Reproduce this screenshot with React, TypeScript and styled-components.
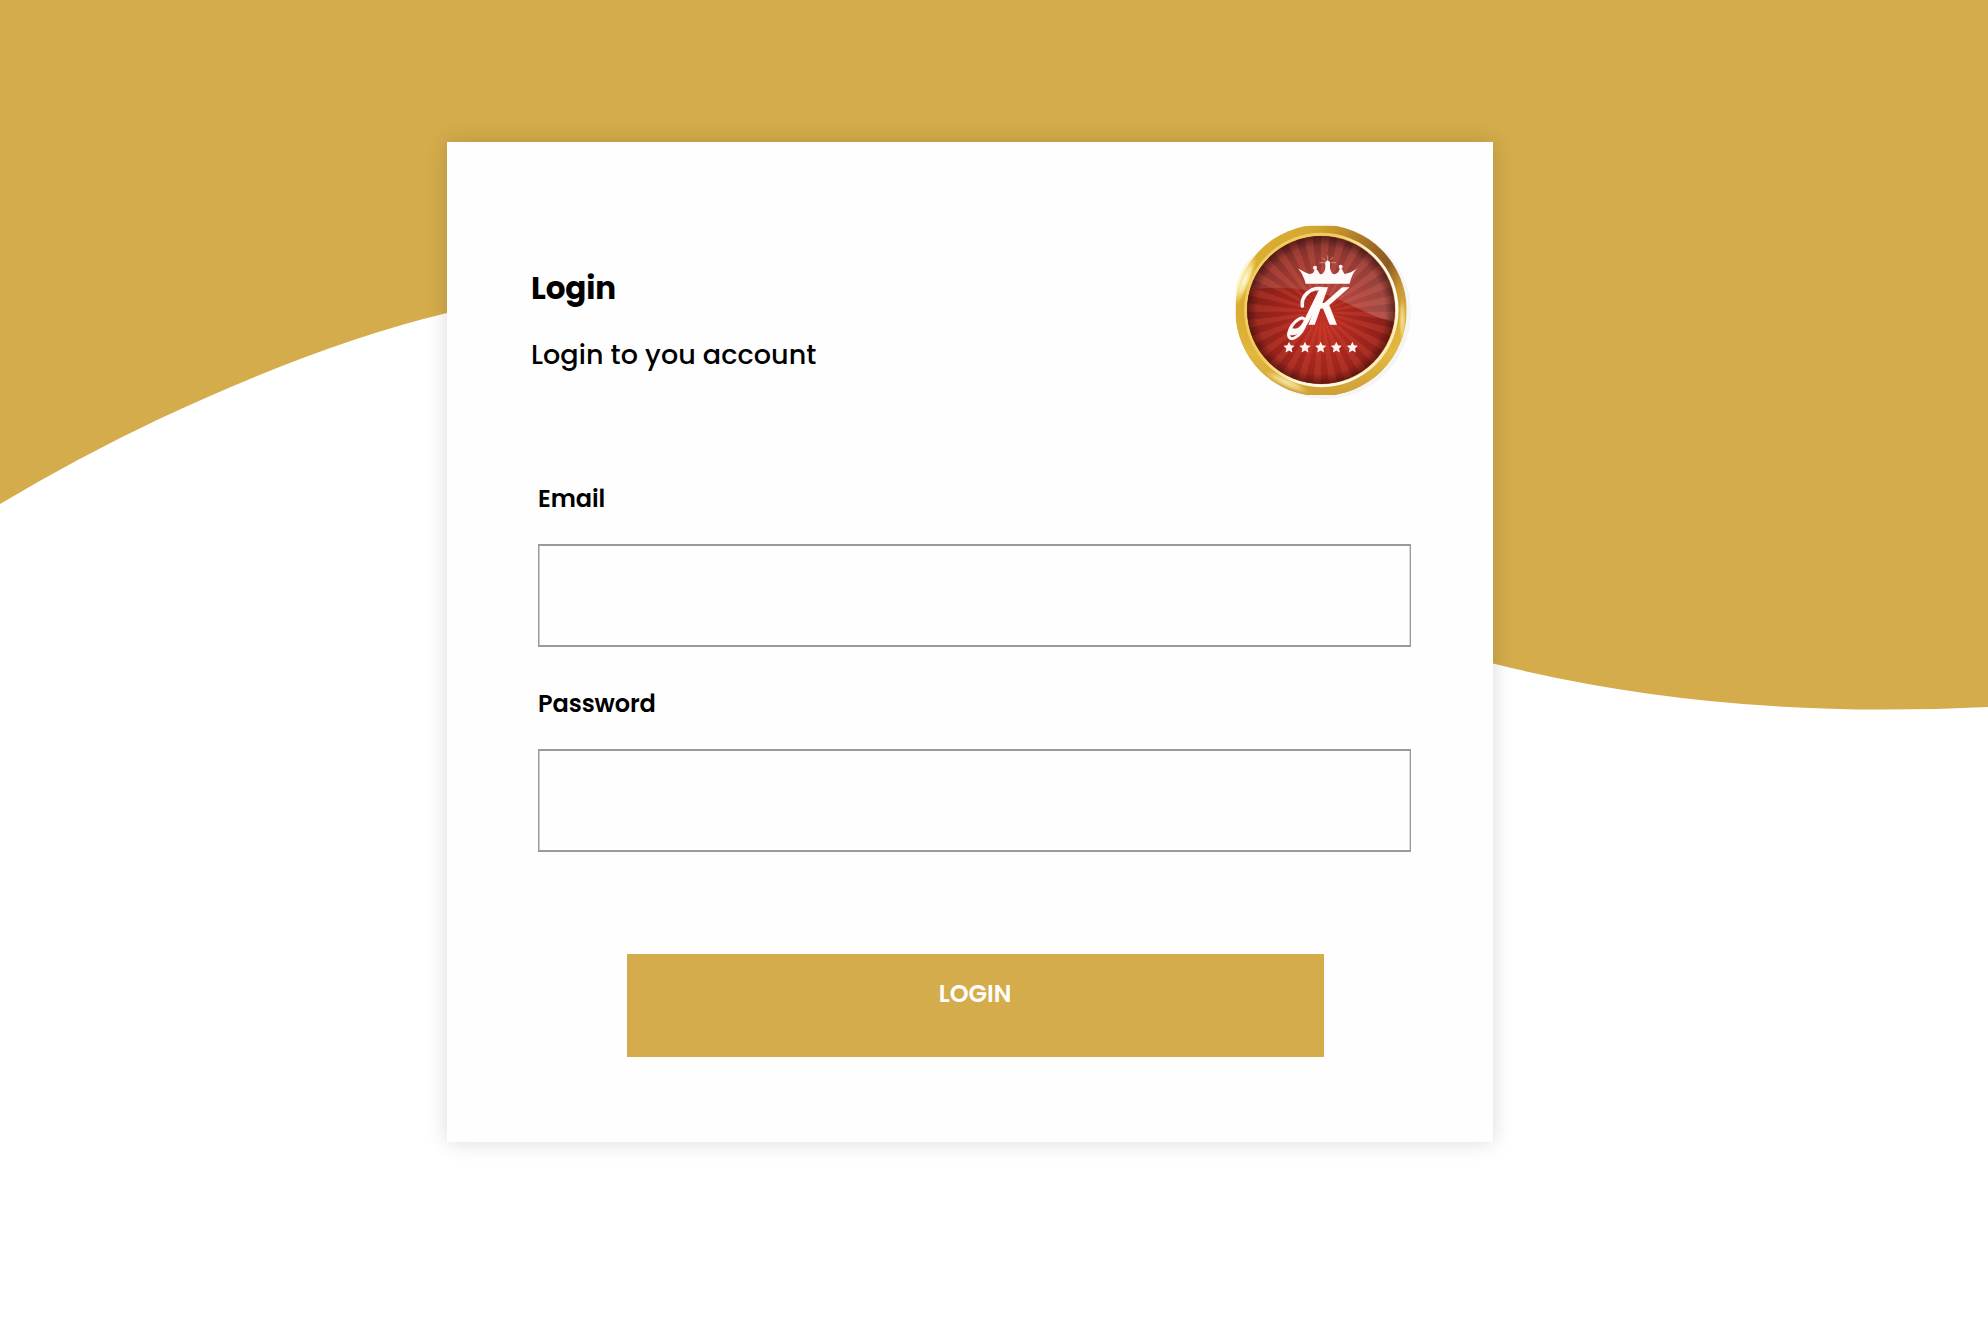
import React from "react";
import styled, { createGlobalStyle } from "styled-components";

const GOLD = "#d4ac4b";

const GlobalStyle = createGlobalStyle`
  *, *::before, *::after { box-sizing: border-box; }
  body {
    margin: 0;
    background: #fff;
    color: #000;
    font-family: Poppins, Inter, "Open Sans", sans-serif;
  }
`;

const Page = styled.main`
  position: relative;
  min-height: 1322px;
  padding: 142px 0 0 447px;
  overflow: hidden;
`;

const Wave = styled.svg`
  position: absolute;
  top: 0;
  left: 0;
  display: block;
`;

const Card = styled.section`
  position: relative;
  width: 1046px;
  height: 1000px;
  padding: 63px 78px 0 84px;
  background: #fefefe;
  box-shadow: 0 0 20px rgba(0, 0, 0, 0.15);
`;

const Header = styled.header`
  display: flex;
  justify-content: space-between;
  height: 263px;
`;

const Heading = styled.div`
  padding-top: 61px;
`;

const Title = styled.h1`
  margin: 0;
  font-size: 31px;
  line-height: 44px;
  font-weight: 700;
  letter-spacing: -0.15px;
`;

const Subtitle = styled.p`
  margin: 24px 0 0;
  font-size: 27px;
  line-height: 41px;
  font-weight: 500;
  letter-spacing: 0.07px;
`;

const Logo = styled.svg`
  width: 210px;
  height: 210px;
  margin-right: -10px;
`;

const Form = styled.form`
  padding-left: 7px;
`;

const Field = styled.label`
  display: block;
  height: 205px;
`;

const LabelText = styled.span`
  display: block;
  height: 76px;
  padding-top: 13px;
  font-size: 24px;
  line-height: 35px;
  font-weight: 600;
  letter-spacing: -0.1px;
`;

const Input = styled.input`
  display: block;
  width: 873px;
  height: 103px;
  padding: 0 24px;
  border: solid #979a9e;
  border-width: 2px 1px;
  border-radius: 0;
  outline: none;
  background: #fefefe;
  box-shadow: inset 1px 0 #c9cbcd, inset -1px 0 #d9dbdc;
  font: inherit;
  font-size: 24px;
`;

const Submit = styled.button`
  display: block;
  width: 697px;
  height: 103px;
  margin: 76px 0 0 89px;
  padding: 0 1px 25px 0;
  border: 0;
  background: ${GOLD};
  color: #fefefe;
  font: inherit;
  font-size: 24px;
  font-weight: 600;
  letter-spacing: 0;
`;

const rays = Array.from({ length: 28 }, (_, i) => {
  const a = (i / 28) * Math.PI * 2;
  const b = a + Math.PI / 28;
  return `M318 320L${318 + 300 * Math.cos(a)} ${320 + 300 * Math.sin(a)}L${318 + 300 * Math.cos(b)} ${320 + 300 * Math.sin(b)}Z`;
}).join("");

const starPoints = (cx: number, cy: number) =>
  Array.from({ length: 10 }, (_, i) => {
    const r = i % 2 ? 8.5 : 17.5;
    const a = -Math.PI / 2 + (i * Math.PI) / 5;
    return `${cx + r * Math.cos(a)},${cy + r * Math.sin(a)}`;
  }).join(" ");

function Emblem() {
  return (
    <Logo viewBox="0 0 630 630" aria-label="JK">
      <defs>
        <linearGradient id="rim" x1="0.05" y1="0.25" x2="0.95" y2="0.7">
          <stop offset="0" stopColor="#dcae30" />
          <stop offset="0.25" stopColor="#d6a733" />
          <stop offset="0.42" stopColor="#c08c2b" />
          <stop offset="0.6" stopColor="#a06c25" />
          <stop offset="0.74" stopColor="#8c5a1f" />
          <stop offset="0.86" stopColor="#c89734" />
          <stop offset="1" stopColor="#dfb33f" />
        </linearGradient>
        <linearGradient id="rimLow" x1="0" y1="0" x2="0" y2="1">
          <stop offset="0.45" stopColor="#dcae35" stopOpacity="0" />
          <stop offset="0.75" stopColor="#e3b93f" />
          <stop offset="1" stopColor="#cf9e34" />
        </linearGradient>
        <radialGradient id="shine">
          <stop offset="0" stopColor="#fffbe2" />
          <stop offset="0.5" stopColor="#fdf1ae" stopOpacity="0.75" />
          <stop offset="1" stopColor="#f5d765" stopOpacity="0" />
        </radialGradient>
        <linearGradient id="bevel" x1="0" y1="0.2" x2="1" y2="0.8">
          <stop offset="0" stopColor="#f0cf62" />
          <stop offset="0.35" stopColor="#f0cb5c" />
          <stop offset="0.6" stopColor="#fff6dc" />
          <stop offset="0.85" stopColor="#fffdf4" />
          <stop offset="1" stopColor="#f4d98c" />
        </linearGradient>
        <radialGradient id="red" cx="0.5" cy="0.62" r="0.6">
          <stop offset="0" stopColor="#c03124" />
          <stop offset="0.45" stopColor="#a0251d" />
          <stop offset="0.82" stopColor="#842019" />
          <stop offset="1" stopColor="#621714" />
        </radialGradient>
        <radialGradient id="edge">
          <stop offset="0.86" stopColor="#350908" stopOpacity="0" />
          <stop offset="1" stopColor="#350908" stopOpacity="0.55" />
        </radialGradient>
        <linearGradient id="gloss" x1="0" y1="0" x2="1" y2="1">
          <stop offset="0" stopColor="#fff" stopOpacity="0.04" />
          <stop offset="1" stopColor="#fff" stopOpacity="0.2" />
        </linearGradient>
        <clipPath id="rimClip">
          <path d="M62 62H575V570H62Z" />
        </clipPath>
        <clipPath id="faceClip">
          <circle cx="318" cy="315" r="222" />
        </clipPath>
      </defs>
      <circle cx="328" cy="322" r="260" fill="#f5f5f5" />
      <g clipPath="url(#rimClip)">
        <circle cx="318" cy="316" r="257" fill="url(#rim)" />
        <circle cx="318" cy="316" r="257" fill="url(#rimLow)" />
        <ellipse cx="89" cy="225" rx="21" ry="85" transform="rotate(22 89 225)" fill="url(#shine)" />
        <ellipse cx="215" cy="532" rx="78" ry="17" transform="rotate(25 215 532)" fill="url(#shine)" opacity="0.7" />
        <ellipse cx="562" cy="345" rx="11" ry="70" fill="url(#shine)" opacity="0.6" />
      </g>
      <circle cx="319" cy="315" r="227" fill="none" stroke="url(#bevel)" strokeWidth="9" />
      <g clipPath="url(#faceClip)">
        <circle cx="318" cy="315" r="223" fill="url(#red)" />
        <path d={rays} fill="#e2513c" opacity="0.27" />
        <path d="M80 254C220 240 310 254 382 288C438 314 486 342 560 356V70H80Z" fill="url(#gloss)" />
        <circle cx="318" cy="315" r="223" fill="url(#edge)" />
      </g>
      <path
        d="M272 236L268 223Q261 203 249 190Q270 204 284 207Q302 207 298 187Q311 198 315 208Q334 207 331 173L338 165L345 173Q343 207 359 208Q374 204 376 184Q383 197 388 207Q407 205 427 190Q411 204 404 236Z"
        fill="#fffafa"
      />
      <g fill="#fffafa">
        <circle cx="300" cy="188" r="6" />
        <circle cx="338" cy="175" r="7" />
        <circle cx="377" cy="185" r="6" />
      </g>
      <path
        d="M338 151V170M313 173H331M347 173H363M321 157L331 167M355 156L345 166"
        stroke="#f9c8b8"
        strokeWidth="2"
        opacity="0.8"
      />
      <g fill="#fffafa" fontFamily="Lato, sans-serif" fontStyle="italic" fontWeight="400">
        <text transform="translate(223 386) skewX(-22) scale(0.72 1)" fontSize="190" stroke="#fffafa" strokeWidth="5">J</text>
        <text transform="translate(277 356) skewX(-13) scale(0.98 1)" fontSize="150" stroke="#fffafa" strokeWidth="5">K</text>
      </g>
      <g fill="none" stroke="#fffafa" strokeLinecap="round">
        <ellipse cx="246" cy="370" rx="17" ry="36" transform="rotate(36 246 370)" strokeWidth="9" />
        <path d="M318 251C286 247 258 274 262 303" strokeWidth="11" />
      </g>
      <g fill="#fff4f2">
        {[222, 270, 317, 364, 412].map((x) => (
          <polygon key={x} points={starPoints(x, 428)} />
        ))}
      </g>
    </Logo>
  );
}

export default function App() {
  return (
    <>
      <GlobalStyle />
      <Page>
        <Wave width="1988" height="720" viewBox="0 0 1988 720" aria-hidden="true">
          <path
            d="M0 0H1988V707Q1936 709.5 1884 709.5Q1677 709.5 1493 663.5C1100 560 850 220 447 313Q319.6 343.6 157 420Q78 457.5 0 504Z"
            fill={GOLD}
          />
        </Wave>
        <Card>
          <Header>
            <Heading>
              <Title>Login</Title>
              <Subtitle>Login to you account</Subtitle>
            </Heading>
            <Emblem />
          </Header>
          <Form onSubmit={(e) => e.preventDefault()}>
            <Field>
              <LabelText>Email</LabelText>
              <Input type="email" />
            </Field>
            <Field>
              <LabelText>Password</LabelText>
              <Input type="password" />
            </Field>
            <Submit type="submit">LOGIN</Submit>
          </Form>
        </Card>
      </Page>
    </>
  );
}
